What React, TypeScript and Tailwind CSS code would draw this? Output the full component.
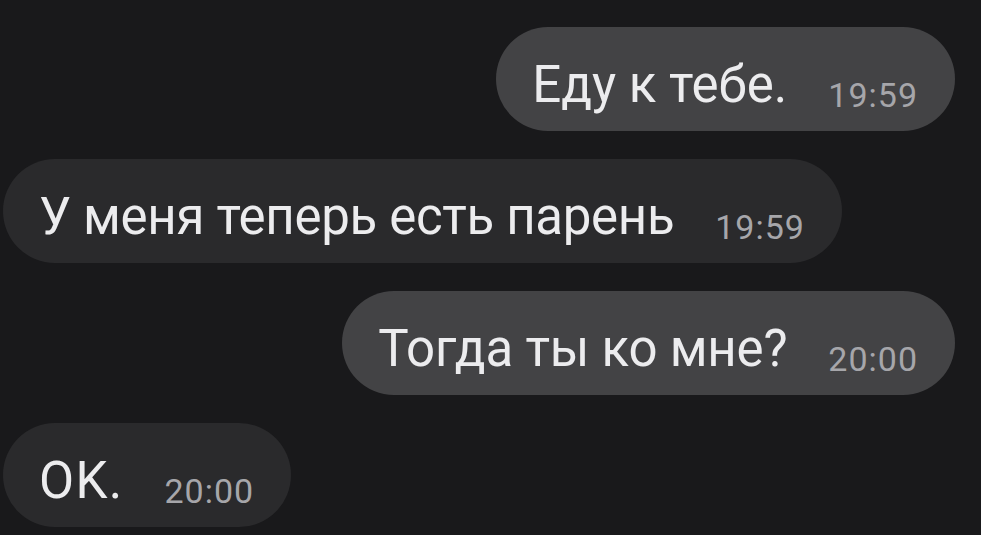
const messages = [
  { text: 'Еду к тебе.', time: '19:59', out: true, fit: 'tracking-normal' },
  { text: 'У меня теперь есть парень', time: '19:59', out: false, fit: 'tracking-[-0.32px]' },
  { text: 'Тогда ты ко мне?', time: '20:00', out: true, fit: 'tracking-[-0.2px]' },
  { text: 'OK.', time: '20:00', out: false, fit: 'tracking-[1.3px]' },
]

function Bubble({ text, time, out, fit }: { text: string; time: string; out: boolean; fit: string }) {
  return (
    <div
      className={`flex h-[104px] items-center rounded-full pl-[36px] pr-[37px] ${
        out ? 'self-end mr-[26px] bg-[#434345]' : 'self-start ml-[3px] bg-[#2a2a2c]'
      }`}
    >
      <div className="flex items-baseline pt-[10px]">
        <span className={`text-[51px] leading-none text-[#ececee] ${fit}`}>{text}</span>
        <span className="ml-[41px] translate-y-[5px] text-[34px] leading-none tracking-[1px] text-[#a6a6aa]">
          {time}
        </span>
      </div>
    </div>
  )
}

export default function App() {
  return (
    <main
      className="flex h-screen w-full flex-col gap-[28px] overflow-hidden bg-[#19191b] pt-[27px]"
      style={{ fontFamily: 'Roboto, "Liberation Sans", sans-serif' }}
    >
      {messages.map((m, i) => (
        <Bubble key={i} {...m} />
      ))}
    </main>
  )
}
